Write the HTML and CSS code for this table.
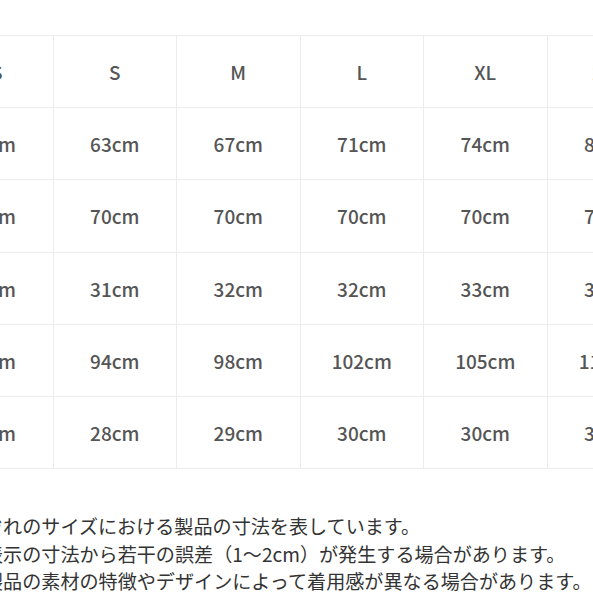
FILE: index.html
```html
<!DOCTYPE html>
<html lang="ja">
<head>
<meta charset="utf-8">
<link rel="stylesheet" href="styles.css">
</head>
<body>
<div class="page">
  <table class="size-table">
    <tr><td>XS</td><td>S</td><td>M</td><td>L</td><td>XL</td><td>2XL</td></tr>
    <tr><td>59cm</td><td>63cm</td><td>67cm</td><td>71cm</td><td>74cm</td><td>80cm</td></tr>
    <tr><td>70cm</td><td>70cm</td><td>70cm</td><td>70cm</td><td>70cm</td><td>70cm</td></tr>
    <tr><td>30cm</td><td>31cm</td><td>32cm</td><td>32cm</td><td>33cm</td><td>34cm</td></tr>
    <tr><td>90cm</td><td>94cm</td><td>98cm</td><td>102cm</td><td>105cm</td><td>110cm</td></tr>
    <tr><td>27cm</td><td>28cm</td><td>29cm</td><td>30cm</td><td>30cm</td><td>31cm</td></tr>
  </table>
  <div class="notes">
    <p>ぞれのサイズにおける製品の寸法を表しています。</p>
    <p>表示の寸法から若干の誤差（1～2cm）が発生する場合があります。</p>
    <p>製品の素材の特徴やデザインによって着用感が異なる場合があります。</p>
  </div>
</div>
</body>
</html>
```
FILE: styles.css
```css
html, body {
  margin: 0;
  padding: 0;
  background: #ffffff;
  overflow: hidden;
}
.page {
  width: 593px;
  height: 593px;
  overflow: hidden;
  padding-top: 35px;
  box-sizing: border-box;
  font-family: "Noto Sans CJK JP", "Noto Sans", sans-serif;
}
.size-table {
  margin-left: -71px;
  border-collapse: collapse;
  table-layout: fixed;
  width: 741px;
}
.size-table td {
  width: 122.5px;
  height: 71.2px;
  padding: 0;
  border: 1px solid #ececec;
  text-align: center;
  vertical-align: middle;
  font-size: 19px;
  font-weight: 500;
  color: #555555;
}
.notes {
  margin-top: 44px;
  margin-left: -16px;
  font-size: 19.1px;
  color: #333333;
  line-height: 27.5px;
  white-space: nowrap;
}
.notes p {
  margin: 0;
}
```
